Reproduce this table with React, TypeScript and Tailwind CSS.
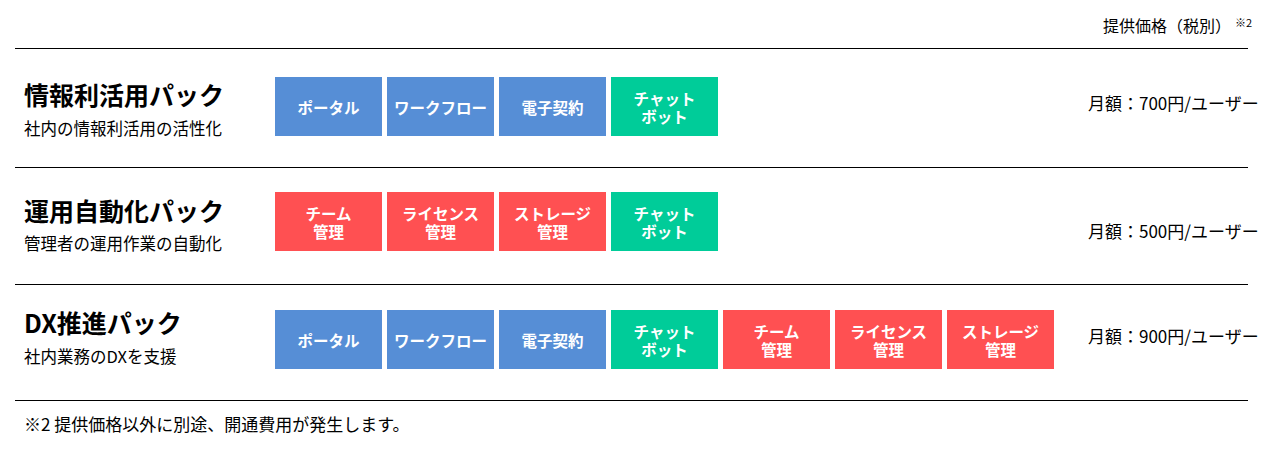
import React from "react";

type Tag = { label: string[]; color: "blue" | "green" | "red" };

const colorClass: Record<Tag["color"], string> = {
  blue: "bg-[#568ed6]",
  green: "bg-[#00cc99]",
  red: "bg-[#ff5052]",
};

const portal: Tag = { label: ["ポータル"], color: "blue" };
const workflow: Tag = { label: ["ワークフロー"], color: "blue" };
const contract: Tag = { label: ["電子契約"], color: "blue" };
const chatbot: Tag = { label: ["チャット", "ボット"], color: "green" };
const team: Tag = { label: ["チーム", "管理"], color: "red" };
const license: Tag = { label: ["ライセンス", "管理"], color: "red" };
const storage: Tag = { label: ["ストレージ", "管理"], color: "red" };

type Row = {
  title: string;
  sub: string;
  tags: Tag[];
  price: string;
  h: string;
  titleMt: string;
  subMt: string;
  boxMt: string;
  priceMt: string;
};

const rows: Row[] = [
  {
    title: "情報利活用パック",
    sub: "社内の情報利活用の活性化",
    tags: [portal, workflow, contract, chatbot],
    price: "月額：700円/ユーザー",
    h: "h-[118px]",
    titleMt: "mt-[28px]",
    subMt: "mt-[5px]",
    boxMt: "mt-[28px]",
    priceMt: "mt-[42px]",
  },
  {
    title: "運用自動化パック",
    sub: "管理者の運用作業の自動化",
    tags: [team, license, storage, chatbot],
    price: "月額：500円/ユーザー",
    h: "h-[116px]",
    titleMt: "mt-[25px]",
    subMt: "mt-[4px]",
    boxMt: "mt-[24px]",
    priceMt: "mt-[51px]",
  },
  {
    title: "DX推進パック",
    sub: "社内業務のDXを支援",
    tags: [portal, workflow, contract, chatbot, team, license, storage],
    price: "月額：900円/ユーザー",
    h: "h-[115px]",
    titleMt: "mt-[20px]",
    subMt: "mt-[5px]",
    boxMt: "mt-[25px]",
    priceMt: "mt-[39px]",
  },
];

function Box({ tag }: { tag: Tag }) {
  return (
    <div
      className={`${colorClass[tag.color]} w-[107px] h-[59px] flex flex-col items-center justify-center text-white font-bold text-[15.5px] leading-[18px] text-center`}
    >
      {tag.label.map((l, i) => (
        <span key={i} className="block h-[18px]">
          {l}
        </span>
      ))}
    </div>
  );
}

function Line() {
  return <div className="ml-[15px] w-[1233px] h-px bg-black" />;
}

export default function App() {
  return (
    <div
      className="w-[1280px] h-[450px] bg-white text-black overflow-hidden"
      style={{ fontFamily: '"Noto Sans CJK JP", "Noto Sans", sans-serif' }}
    >
      <div className="h-[48px] flex justify-end items-start pt-[13px] pr-[28px]">
        <span className="text-[16px] leading-[24px]">提供価格（税別）</span>
        <span className="text-[11px] leading-[12px] ml-[4px] mt-[3px]">※2</span>
      </div>
      <Line />
      {rows.map((r, i) => (
        <React.Fragment key={i}>
          <div className={`${r.h} flex items-start pl-[24px]`}>
            <div className="w-[251px] flex flex-col">
              <div className={`${r.titleMt} text-[25px] leading-[34px] font-bold whitespace-nowrap`}>
                {r.title}
              </div>
              <div className={`${r.subMt} text-[16.5px] leading-[24px] whitespace-nowrap`}>{r.sub}</div>
            </div>
            <div className={`w-[813px] flex gap-[5px] ${r.boxMt}`}>
              {r.tags.map((t, j) => (
                <Box key={j} tag={t} />
              ))}
            </div>
            <div className={`${r.priceMt} text-[17px] leading-[24px] whitespace-nowrap`}>{r.price}</div>
          </div>
          <Line />
        </React.Fragment>
      ))}
      <div className="mt-[11px] pl-[24px] text-[17px] leading-[24px] whitespace-nowrap">
        ※2 提供価格以外に別途、開通費用が発生します。
      </div>
    </div>
  );
}
